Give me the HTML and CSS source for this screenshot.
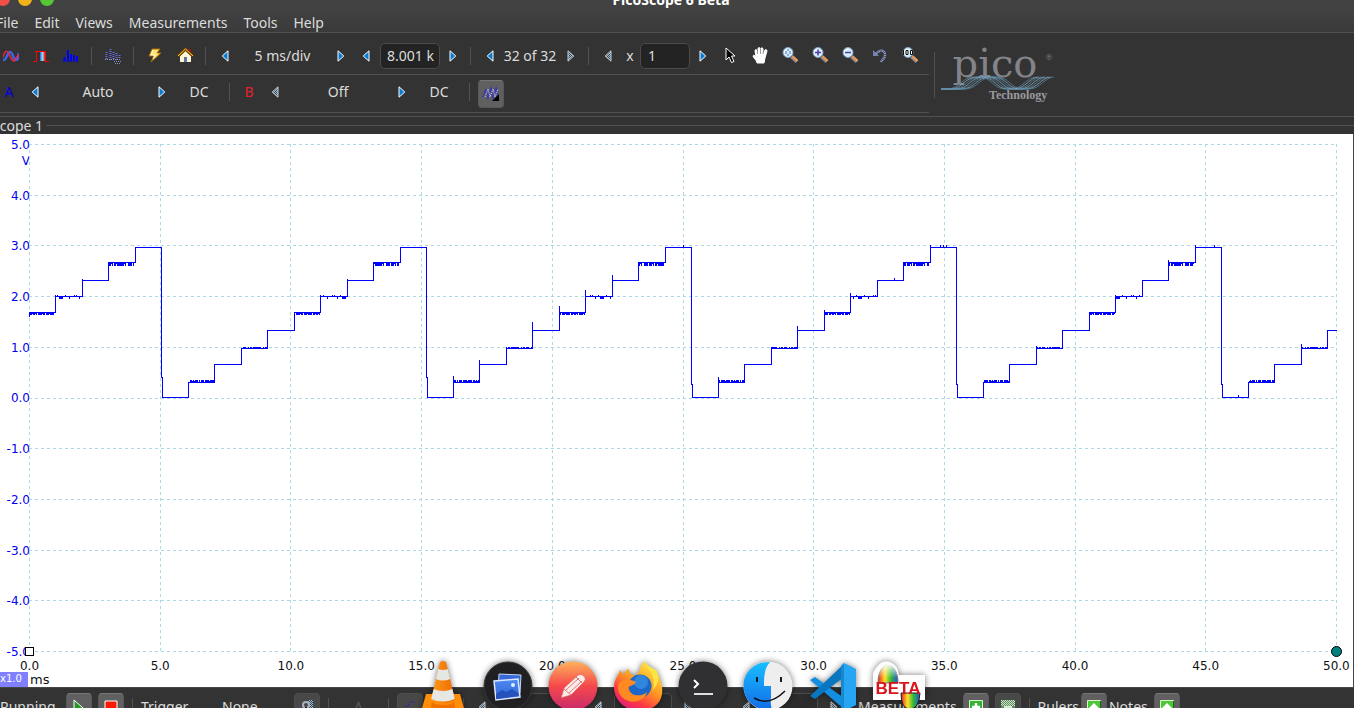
FILE: index.html
```html
<!DOCTYPE html>
<html lang="en">
<head>
<meta charset="utf-8">
<title>PicoScope 6 Beta</title>
<link rel="stylesheet" href="styles.css">
</head>
<body>
<svg class="defs" aria-hidden="true">
  <defs>
    <symbol id="left" viewBox="0 0 8 12"><path d="M7 .8v10.4L1.200 6z" fill="#0a7bd0" stroke="#fff"/></symbol>
    <symbol id="right" viewBox="0 0 8 12"><path d="M1 .8v10.4L6.800 6z" fill="#0a7bd0" stroke="#fff"/></symbol>
    <pattern id="dither" width="2" height="2" patternUnits="userSpaceOnUse"><path d="M0 0h2v2H0z" fill="#38404a"/><path d="M0 0h1v1H0zM1 1h1v1H1z" fill="#9cc0d8"/></pattern>
    <symbol id="left-off" viewBox="0 0 8 12"><path d="M7 .8v10.4L1.200 6z" fill="url(#dither)" stroke="#c4cdd4"/></symbol>
    <symbol id="right-off" viewBox="0 0 8 12"><path d="M1 .8v10.4L6.800 6z" fill="url(#dither)" stroke="#c4cdd4"/></symbol>
    <symbol id="lens" viewBox="0 0 17 17">
      <path d="M9.500 9.500l5.500 5" stroke="#8b8791" stroke-width="4"/><path d="M10.500 9.500l5 4.500" stroke="#f59a4a" stroke-width="2"/>
      <circle cx="6" cy="5.500" r="5" fill="#d3effb" stroke="#7f9dbd"/><path d="M2.500 5a3.500 3.500 0 0 1 3-3" stroke="#fff" fill="none"/>
    </symbol>
  </defs>
</svg>
<div class="window">
  <header class="titlebar">
    <div class="lights"><button class="light close" aria-label="Close"></button><button class="light shrink" aria-label="Minimise"></button><button class="light grow" aria-label="Maximise"></button></div>
    <h1 class="title">PicoScope 6 Beta</h1>
  </header>
  <nav class="menubar">
    <button>File</button><button>Edit</button><button>Views</button><button>Measurements</button><button>Tools</button><button>Help</button>
  </nav>
  <div class="tools">
    <div class="bars">
      <div class="bar">
        <button class="tool" aria-label="Scope mode"><svg viewBox="0 0 16 14" width="16" height="14"><path d="M0 11C4 12 4 3 7 3s3 8 6 8 2-5 3-7" fill="none" stroke="#3f63e8" stroke-width="2.500"/><path d="M0 8c2-7 4-7 6-3s4 9 6 6 2-5 4-5" fill="none" stroke="#f0283c" stroke-width="1.500"/></svg></button>
        <button class="tool" aria-label="Persistence mode"><svg viewBox="0 0 16 12" width="16" height="12"><defs><linearGradient id="band"><stop stop-color="#176bd0"/><stop offset=".5" stop-color="#8edcf5"/><stop offset="1" stop-color="#e02020"/></linearGradient></defs><path d="M7 2h5v9H7z" fill="url(#band)"/><path d="M0 11.500h3.500V1.500h9v10H16M2 1.500h2" fill="none" stroke="#f00"/></svg></button>
        <button class="tool" aria-label="Spectrum mode"><svg viewBox="0 0 16 12" width="16" height="12"><path d="M1.500 7v4M5 0v11M8 4v7M11 5v6M14 6v5" stroke="#0000ff" stroke-width="2"/><path d="M0 11.500h16" stroke="#0000f0" stroke-dasharray="1"/></svg></button>
        <span class="sep"></span>
        <button class="tool" aria-label="Spectrum options" disabled><svg viewBox="0 0 16 16" width="16" height="16"><path d="M1.500 4v8M5.500 1v11M8.500 4v8M11.500 5v7M14.500 7v4" stroke="#6a6cdc" stroke-width="2" stroke-dasharray="1"/><path d="M0 11.500h16M9 13.500h7M10 15.500h6" stroke="#8e90b8" stroke-dasharray="1"/></svg></button>
        <span class="sep"></span>
        <button class="tool" aria-label="Auto setup"><svg viewBox="0 0 14 15" width="14" height="15"><path d="M4 1h8L9 5h4L3 14l3-6H1z" fill="#ffe36e" stroke="#a86a00"/><path d="M5 2L3 7h4l-2 4" fill="none" stroke="#fffbe0"/></svg></button>
        <button class="tool" aria-label="Home"><svg viewBox="0 0 17 15" width="17" height="15"><path d="M11 1h3v6h-3z" fill="#a30d1a"/><path d="M3 8v6h11V8L8.500 3z" fill="#fff5d5"/><path d="M7 9h3v5H7z" fill="#5777a8"/><path d="M1 8l7.500-7L16 8" fill="none" stroke="#6a4500" stroke-width="3"/><path d="M1 8l7.500-7L16 8" fill="none" stroke="#ffc73c"/></svg></button>
        <span class="sep"></span>
        <button class="step" aria-label="Shorter timebase"><svg><use href="#left"/></svg></button>
        <span class="value timebase">5 ms/div</span>
        <button class="step" aria-label="Longer timebase"><svg><use href="#right"/></svg></button>
        <button class="step" aria-label="Fewer samples"><svg><use href="#left"/></svg></button>
        <input class="field samples" aria-label="Samples" value="8.001 k">
        <button class="step" aria-label="More samples"><svg><use href="#right"/></svg></button>
        <span class="sep"></span>
        <button class="step" aria-label="Previous buffer"><svg><use href="#left"/></svg></button>
        <span class="value buffers">32 of 32</span>
        <button class="step" aria-label="Next buffer" disabled><svg><use href="#right-off"/></svg></button>
        <span class="sep"></span>
        <button class="step" aria-label="Zoom factor down" disabled><svg><use href="#left-off"/></svg></button>
        <label class="times" for="factor">x</label>
        <input class="field factor" id="factor" value="1">
        <button class="step" aria-label="Zoom factor up"><svg><use href="#right"/></svg></button>
        <button class="tool" aria-label="Select"><svg viewBox="0 0 11 17" width="11" height="17"><path d="M1 1v12l3-3 2.500 5.500 2.500-1L6.500 9H10z" fill="#000" stroke="#fff"/></svg></button>
        <button class="tool" aria-label="Pan"><svg viewBox="0 0 17 17" width="17" height="17"><path d="M5 16c0-3-4-5-4-7 0-1 2-1 3 1L3 4c0-2 2-2 2 0l1 3V2c0-2 2-2 2 0v5l1-5c0-2 2-1 2 0v5l2-4c1-1 2 0 2 1l-2 7-1 5z" fill="#fff" stroke="#fff"/><path d="M5.500 3v4M8.500 2v5M11.500 4l-.5 3" stroke="#444" stroke-width=".5"/></svg></button>
        <button class="tool" aria-label="Zoom area"><svg viewBox="0 0 17 17" width="17" height="17"><use href="#lens"/><path d="M4 4v3M8 4v3M5 3h2M5 8h2" stroke="#5b62b4" fill="none"/></svg></button>
        <button class="tool" aria-label="Zoom in"><svg viewBox="0 0 17 17" width="17" height="17"><use href="#lens"/><path d="M3 5.500h6M6 2.500v6" stroke="#5535a8" stroke-width="1.500"/></svg></button>
        <button class="tool" aria-label="Zoom out"><svg viewBox="0 0 17 17" width="17" height="17"><use href="#lens"/><path d="M3 5.500h6" stroke="#5535a8" stroke-width="1.500"/></svg></button>
        <button class="tool" aria-label="Undo zoom" disabled><svg viewBox="0 0 16 16" width="16" height="16"><path d="M4 6c4-5 9-4 9 1 0 3-3 5-4 7" fill="none" stroke="#8b9bd0" stroke-width="2.500" stroke-dasharray="1.200 .6"/><path d="M1 2v6h6z" fill="#8b9bd0" opacity=".75"/></svg></button>
        <button class="tool" aria-label="Zoom to full"><svg viewBox="0 0 17 17" width="17" height="17"><use href="#lens"/><path d="M1.500 3v5M4 3.500h2v4H4zM8.500 3.500h2v4h-2z" fill="#fff" stroke="#111"/></svg></button>
      </div>
      <div class="bar channels">
        <button class="channel a">A</button>
        <button class="step" aria-label="Channel A range down"><svg><use href="#left"/></svg></button>
        <span class="value range">Auto</span>
        <button class="step" aria-label="Channel A range up"><svg><use href="#right"/></svg></button>
        <button class="coupling">DC</button>
        <span class="sep"></span>
        <button class="channel b">B</button>
        <button class="step" aria-label="Channel B range down"><svg><use href="#left-off"/></svg></button>
        <span class="value range">Off</span>
        <button class="step" aria-label="Channel B range up"><svg><use href="#right"/></svg></button>
        <button class="coupling">DC</button>
        <span class="sep"></span>
        <button class="raised generator" aria-label="Signal generator"><svg viewBox="0 0 18 16" width="18" height="16"><path d="M1 11l3-8 2 8 3-8 2 8 3-8 2 8" fill="none" stroke="#3a36b8" stroke-width="2" stroke-dasharray="1.500 .7"/><path d="M3 11l3-8 2 8 3-8 2 8 3-8" fill="none" stroke="#d9dcf5" stroke-dasharray="1"/><path d="M17 8v7h-7z" fill="#000"/></svg></button>
      </div>
    </div>
    <div class="brand">
      <svg viewBox="0 0 120 60" width="120" height="60" role="img" aria-label="pico Technology">
        <text class="brand-name" x="60" y="32" text-anchor="middle">pico</text>
        <text class="brand-mark" x="110" y="15">®</text>
        <g id="weave" fill="none" stroke-width=".8"></g>
        <text class="brand-sub" x="54" y="54">Technology</text>
      </svg>
    </div>
  </div>
  <div class="tab"><h2 class="tab-name">Scope 1</h2><span class="tab-rule"></span></div>
  <main class="scope">
    <div class="volts" id="volts"></div>
    <div class="plot">
      <svg id="plot" class="plot-art" viewBox="0 0 1308 508" preserveAspectRatio="none" role="img" aria-label="Channel A staircase waveform"></svg>
      <span class="handle origin"></span>
      <span class="handle end"></span>
    </div>
    <div class="times-axis" id="times"></div>
    <div class="scale"><span class="badge">x1.0</span><span class="unit">ms</span></div>
  </main>
  <footer class="status">
    <span class="word run">Running</span>
    <button class="raised" aria-label="Start"><svg viewBox="0 0 12 16" width="12" height="16"><path d="M1 1v14l9-6z" fill="#239923" stroke="#fff"/></svg></button>
    <button class="raised" aria-label="Stop"><svg viewBox="0 0 14 14" width="14" height="14"><path d="M1 1h12v12H1z" fill="#ff1800" stroke="#fff"/></svg></button>
    <span class="sep"></span>
    <span class="word trigger">Trigger</span>
    <span class="word mode">None</span>
    <button class="raised off" aria-label="Trigger options" disabled><svg viewBox="0 0 14 16" width="14" height="16"><path d="M8 1h5v9H9z" fill="url(#dither)"/><circle cx="6" cy="6" r="3" fill="none" stroke="#aab0c4" stroke-width="2"/><path d="M6 8v7" stroke="#111" stroke-width="2"/></svg></button>
    <span class="sep"></span>
    <button class="word source" disabled>A</button>
    <span class="sep"></span>
    <button class="raised off edge" aria-label="Rising edge" disabled><svg viewBox="0 0 12 12" width="12" height="12"><path d="M1 5h3l2-4h5" stroke="#2020bb" stroke-dasharray="2 1" fill="none"/></svg></button>
    <span class="sep"></span>
    <button class="step low" aria-label="Threshold down" disabled><svg><use href="#left-off"/></svg></button>
    <input class="field threshold" aria-label="Threshold" disabled>
    <button class="step low" aria-label="Threshold up" disabled><svg><use href="#left-off"/></svg></button>
    <input class="field pretrigger" aria-label="Pre-trigger" disabled>
    <button class="step low" aria-label="Pre-trigger up" disabled><svg><use href="#right-off"/></svg></button>
    <button class="step low delay-down" aria-label="Delay down" disabled><svg><use href="#left-off"/></svg></button>
    <input class="field delay" aria-label="Delay" disabled>
    <button class="step low" aria-label="Delay up" disabled><svg><use href="#right-off"/></svg></button>
    <span class="word measure">Measurements</span>
    <button class="raised" aria-label="Add measurement"><svg viewBox="0 0 14 14" width="14" height="14"><path d="M.5.500h13v13H.5z" fill="#32b332" stroke="#d9f5c8"/><path d="M7 3v8M3 7h8" stroke="#fff" stroke-width="2.500"/></svg></button>
    <button class="raised off" aria-label="Remove measurement" disabled><svg viewBox="0 0 14 14" width="14" height="14"><path d="M0 0h14v14H0z" fill="#5c8f5c"/><path d="M0 .5h14M1 1.500h14M0 2.500h14M1 3.500h14M0 4.500h14M1 5.500h14" stroke="#cce0c8" stroke-dasharray="1"/><path d="M3 7h8" stroke="#dce8d8" stroke-width="2"/></svg></button>
    <span class="sep"></span>
    <span class="word">Rulers</span>
    <button class="raised ruler-toggle" aria-label="Show rulers"><svg viewBox="0 0 14 14" width="14" height="14"><path d="M.5.500h13v13H.5z" fill="#4fc53a" stroke="#d9f5c8"/><path d="M13.500 1v13" stroke="#14681c"/><path d="M7 3l5 5H9v4H5V8H2z" fill="#fff"/></svg></button>
    <span class="word">Notes</span>
    <button class="raised" aria-label="Show notes"><svg viewBox="0 0 14 14" width="14" height="14"><path d="M.5.500h13v13H.5z" fill="#4fc53a" stroke="#d9f5c8"/><path d="M13.500 1v13" stroke="#14681c"/><path d="M7 3l5 5H9v4H5V8H2z" fill="#fff"/></svg></button>
  </footer>
  <nav class="dock" aria-label="Dock">
    <button aria-label="VLC"><svg viewBox="0 0 52 52"><defs><linearGradient id="cone"><stop stop-color="#ff9a1c"/><stop offset="1" stop-color="#ec6a00"/></linearGradient></defs><path d="M9 34h34l5 18H4z" fill="#ff8d08"/><path d="M15 42c4 4 18 4 22 0l2 10H13z" fill="#ef7200"/><path d="M23 2q3-2 6 0l9 38q-12 7-24 0z" fill="url(#cone)"/><path d="M21.300 9q4.700 2 9.400 0l2.400 10q-7 3-14.200 0zM16.600 29q9.400 4 18.800 0l2.400 10q-11.800 5-23.600 0z" fill="#e6e6e3"/></svg></button>
    <button aria-label="Photos"><svg viewBox="0 0 52 52"><defs><linearGradient id="sky" x2="0" y2="1"><stop stop-color="#4d8bf0"/><stop offset="1" stop-color="#2f62d8"/></linearGradient></defs><circle cx="26" cy="26" r="24" fill="#202022" stroke="#39393b"/><path d="M17 14l22 1-1 18-22-1z" fill="#3869d8" stroke="#c6d6f4"/><path d="M12 21l24-2 2 18-24 3z" fill="url(#sky)" stroke="#dce8ff" stroke-width="1.500"/><path d="M14 34l6-4 4 2 6-3 6 4 1 3-23 3z" fill="#2553bb"/><circle cx="31" cy="25" r="2" fill="#dff0ff"/></svg></button>
    <button aria-label="Editor"><svg viewBox="0 0 52 52"><defs><linearGradient id="sunset" x2="0" y2="1"><stop stop-color="#ffb25c"/><stop offset=".5" stop-color="#f5484b"/><stop offset="1" stop-color="#c72a6c"/></linearGradient></defs><circle cx="26" cy="26" r="24.500" fill="url(#sunset)"/><path d="M14 38l3-10 14-13q3-2 6 1t0 6L24 35zM17 29l7 6M29 17l7 7M19 30l13-12M22 33l13-12" fill="#f7ecea" stroke="#e35b55" stroke-width=".8"/></svg></button>
    <button aria-label="Firefox"><svg viewBox="0 0 52 52"><defs><linearGradient id="fox" x1=".8" y1="0" x2=".2" y2="1"><stop stop-color="#fff04a"/><stop offset=".45" stop-color="#ff9620"/><stop offset=".75" stop-color="#ff3648"/><stop offset="1" stop-color="#d61884"/></linearGradient></defs><path d="M8 10l4 5q2-6 5-6 0 5 5 7c3-2 5-3 6-7 1-5 4-7 5-8 0 7 7 8 9 14l2-3c5 7 7 15 6 22-2 13-14 17-24 17S2 42 2 27C2 19 6 17 8 10z" fill="url(#fox)"/><circle cx="28" cy="26" r="11.500" fill="#1c67c8"/><circle cx="29" cy="22" r="7" fill="#2f86dc"/><path d="M7 23c5-4 11-4 17-1-2 4-6 3-8 6 2 9 14 9 19 4-2 9-16 14-25 5-4-4-5-9-3-14z" fill="#ff8a22"/><path d="M33 1c0 8 12 11 8 29 6-6 7-15 3-20-4-2-9-4-11-9z" fill="#ffe544"/></svg></button>
    <button aria-label="Terminal"><svg viewBox="0 0 52 52"><circle cx="26" cy="26" r="24.500" fill="#303032"/><path d="M17 20l4 4-4 4" fill="none" stroke="#fff" stroke-width="2"/><path d="M17 34h19" stroke="#dedede" stroke-width="2"/></svg></button>
    <button aria-label="Files"><svg viewBox="0 0 52 52"><defs><linearGradient id="face" x2="0" y2="1"><stop stop-color="#18bfff"/><stop offset="1" stop-color="#126be8"/></linearGradient></defs><circle cx="26" cy="26" r="24.500" fill="#eeeeef"/><path d="M28 2C13 1 1.500 12 1.500 26S13 51 30 50q-2-6-1-13V26h-7c0-12 1-18 6-24z" fill="url(#face)"/><path d="M15 17v5M39 17v5" stroke="#1a1a1c" stroke-width="2"/><path d="M12 38q15 9 31-7" stroke="#111" stroke-width="1.500" fill="none"/></svg></button>
    <button aria-label="Code"><svg viewBox="0 0 52 52"><path d="M8 17l-5 3 34 29V38z" fill="#138ee0"/><path d="M8 39l-5-3L37 4v13z" fill="#0876c0"/><path d="M37 3l12 6v36l-12 6z" fill="#25a5f2"/><path d="M37 3v48l-3-3V6z" fill="#1689d0"/></svg></button>
    <button aria-label="PicoScope"><svg viewBox="0 0 52 52"><defs><linearGradient id="rainbow"><stop stop-color="#e42222"/><stop offset=".35" stop-color="#ffe325"/><stop offset=".65" stop-color="#2fba36"/><stop offset="1" stop-color="#284de0"/></linearGradient><linearGradient id="shine" x2="0" y2="1"><stop stop-color="#fff"/><stop offset="1" stop-color="#fff" stop-opacity="0"/></linearGradient></defs><path d="M1 13q7-15 17-11 8 3 9 13h26v25H1z" fill="#fdfdfd"/><path d="M6 23c0-24 20-24 20 0z" fill="url(#rainbow)" stroke="#777"/><path d="M6 18c1-20 19-20 20 0z" fill="url(#shine)"/><path d="M29 33h19q-1 16-10 16T29 33z" fill="url(#rainbow)" stroke="#222"/><text class="beta" x="26" y="34" text-anchor="middle">BETA</text></svg></button>
  </nav>
</div>
<script src="chart.js"></script>
</body>
</html>
```

FILE: styles.css
```css
* { box-sizing: border-box; }
body {
  margin: 0;
  height: 100vh;
  overflow: hidden;
  background: #333;
  color: #dcdcdc;
  font-family: "Noto Sans", sans-serif;
  font-size: 14px;
  line-height: 20px;
}
button { padding: 0; border: 0; background: none; color: inherit; font: inherit; }
.defs { position: absolute; width: 0; height: 0; }

/* The window's frame reaches past the left and top screen edges. */
.window { position: relative; display: flex; flex-direction: column; height: 100vh; margin-left: -12px; }

.titlebar { display: grid; grid-template-columns: 1fr auto 1fr; align-content: end; align-items: end; height: 10px; overflow: hidden; background: #424242; }
.lights { display: flex; gap: 8px; padding: 0 0 4px 8px; }
.light { width: 14px; height: 14px; border-radius: 50%; }
.close { background: #ee5048; }
.shrink { background: #f3b11b; }
.grow { background: #55c736; }
.title { margin: 0; font-size: 14px; font-weight: 700; line-height: 20px; color: #fff; }
.menubar { display: flex; align-items: center; height: 23px; padding: 3px 0 0 0; background: linear-gradient(#414141, #3a3a3a); border-bottom: 1px solid #515151; }
.menubar button { padding: 0 8px; }

.tools { display: flex; height: 84px; border-bottom: 1px solid #515151; }
.bars { width: 941px; }
.bar { display: flex; align-items: center; height: 42px; padding: 4px 0 0 8px; border-bottom: 1px solid #515151; }
.channels { height: 38px; padding-top: 0; padding-bottom: 4px; }
.tool { display: flex; align-items: center; justify-content: center; width: 30px; height: 28px; }
.sep { flex: none; width: 1px; height: 18px; margin: 0 6px 0 5px; background: #515151; }
.step { display: flex; flex: none; align-items: center; justify-content: center; width: 25px; height: 24px; }
.step svg { width: 8px; height: 12px; }
.value { text-align: center; white-space: nowrap; }
.timebase { width: 91px; }
.buffers { width: 56px; }
.range { width: 102px; }
.coupling { width: 50px; }
.channel { width: 26px; }
.a { color: #0000e0; }
.b { color: #e0242e; }
.times { width: 20px; text-align: center; }
.field { height: 26px; padding: 0 7px; border: 1px solid #4c4c4c; border-radius: 5px; background: #232323; color: #dcdcdc; font: inherit; }
.samples { width: 60px; margin-left: 2px; padding: 0 0 0 6px; }
.factor { width: 50px; }
.raised { display: flex; flex: none; align-items: center; justify-content: center; width: 26px; height: 28px; border: 1px solid #585858; border-top-color: #777; border-radius: 4px; background: #606060; }
.off { background: #484848; border-color: #4d4d4d; }
.generator { margin: 4px 0 0 2px; }

.brand { display: flex; align-items: center; height: 46px; margin: 19px 0 0 5px; border-left: 1px solid #515151; }
.brand svg { overflow: visible; }
.brand-name { font: 40px "DejaVu Serif", serif; fill: #83838a; }
.brand-mark { font: 8px "DejaVu Serif", serif; fill: #83838a; }
.brand-sub { font: 700 12px "Liberation Serif", serif; fill: #9a9a9e; }

.tab { display: flex; align-items: center; height: 17px; padding-left: 4px; }
.tab-name { margin: 0; font-size: 14px; font-weight: 400; line-height: 17px; }
.tab-rule { flex: 1; height: 1px; margin-left: 3px; background: #515151; }

.scope {
  display: grid;
  flex: 1;
  grid-template: minmax(0, 1fr) 20px 15px / 29px minmax(0, 1fr) 16px;
  margin-left: 12px;
  padding-top: 10px;
  min-height: 0;
  border-right: 1px solid #444;
  background: #fff;
  color: #111;
  font-family: "DejaVu Sans", sans-serif;
  font-size: 12px;
  line-height: 16px;
}
.volts { display: flex; flex-direction: column; justify-content: space-between; margin: -7px -1px -8px 0; color: #0000f0; text-align: right; }
.volts span { height: 16px; }
.plot { position: relative; }
.plot-art { display: block; width: 100%; height: 100%; overflow: visible; }
.plot-art path { fill: none; shape-rendering: crispEdges; vector-effect: non-scaling-stroke; }
.rule { stroke: #add8e6; stroke-dasharray: 3 3; }
.trace { stroke: #00f; }
.handle { position: absolute; border: 1px solid #000; }
.origin { bottom: -4px; left: -4px; width: 9px; height: 9px; background: #fff; }
.end { right: -5px; bottom: -5px; width: 11px; height: 11px; border-radius: 50%; background: #008080; }
.times-axis { display: flex; grid-column: 1 / -1; justify-content: space-between; padding: 6px 0 0 12px; margin-right: -1px; }
.times-axis span { width: 35px; text-align: center; }
.scale { display: flex; grid-column: 1 / -1; gap: 2px; align-items: center; }
.badge { width: 28px; height: 15px; background: #8080ff; color: #fff; font-size: 10px; line-height: 14px; }
.unit { font-size: 13px; line-height: 15px; }

.status { display: flex; gap: 6px; height: 21px; padding: 5px 0 0 12px; overflow: hidden; border-top: 1px solid #454545; }
.status .sep { height: 18px; margin: 5px 2px; }
.word { flex: none; line-height: 28px; height: 28px; }
.run { width: 60px; }
.trigger { width: 75px; }
.mode { width: 66px; }
.source { width: 43px; color: #5c5c5c; }
.edge { margin-right: 32px; }
.low { width: 20px; height: 28px; }
.threshold { width: 84px; }
.pretrigger { width: 58px; }
.delay-down { margin-left: 32px; }
.delay { width: 56px; }
.status .field { background: #2c2c2c; height: 28px; }
.measure { margin-left: 8px; }
.ruler-toggle { margin: 0 -4px; }

.dock { position: absolute; bottom: -4px; left: 50%; display: flex; width: 520px; height: 52px; margin-left: -261px; }
.dock button { width: 65px; filter: drop-shadow(0 0 3px #0008); }
.dock svg { width: 52px; height: 52px; overflow: visible; }
.beta { font: 700 17px "Liberation Sans", sans-serif; fill: #d8141e; }
```

FILE: chart.js
```js
const NS = "http://www.w3.org/2000/svg";
function addPath(parent, d, attributes) {
  const path = document.createElementNS(NS, "path");
  path.setAttribute("d", d);
  for (const [name, value] of Object.entries(attributes)) path.setAttribute(name, value);
  parent.append(path);
}

const plot = document.getElementById("plot");
const volts = document.getElementById("volts");
const times = document.getElementById("times");

// Grid and axis labels
for (let i = 0; i <= 10; i++) {
  const x = Math.round(i * 130.7) + 0.5;
  const y = Math.round(i * 50.7) + 0.5;
  addPath(plot, `M${x} 0V508`, { class: "rule" });
  addPath(plot, `M0 ${y}H1308`, { class: "rule" });
  const volt = document.createElement("span");
  volt.append((5 - i).toFixed(1));
  if (i === 0) volt.append(document.createElement("br"), "V");
  volts.append(volt);
  const time = document.createElement("span");
  time.textContent = (i * 5).toFixed(1);
  times.append(time);
}

// Staircase levels, bottom to top, and where each tread starts within a cycle
const levels = [253.5, 238.5, 220.5, 204.5, 186.5, 168.5, 152.5, 136.5, 118.5, 103.5];
const starts = [1, 27, 53, 80, 106, 133, 159, 186, 212, 239, 265];
const period = 265;

// Height of the overshoot at the start of each tread, per cycle
const overshoot = [
  [0, 0, 0, 0, 0, 0, 2, 2, 0, 0],
  [0, 0, 0, 0, 0, 0, 2, 2, 0, 0],
  [0, 7, 5, 2, 9, 7, 7, 6, 0, 0],
  [0, 6, 0, 2, 5, 3, 4, 0, 0, 3],
  [0, 0, 0, 3, 0, 0, 2, 0, 3, 3],
  [0, 0, 0, 5, 0, 0, 0, 0, 0, 0]
];
// One character per pixel: # is a full tick, - a half tick, ^ a tick the other way
const noise = {
  1: [3, "##-####.##-#-###.#.###.##"],
  3: [2, "#-.#.##-###..#.##.#######"],
  5: [-2, "##-##-#.####-##.###-####."],
  6: [-2, ".^.####..^...#....^.^..#."],
  8: [-3, "##-#.##-#######-#..####.#"]
};

let d = "";
for (let cycle = 0; cycle < 6; cycle++) {
  const origin = 132.5 + (cycle - 1) * period;
  for (let n = 0; n < 10; n++) {
    const from = origin + starts[n];
    const to = Math.min(origin + starts[n + 1], 1307.5);
    if (to <= 0.5 || from > 1307) continue;
    const y = levels[n];
    const top = y - overshoot[cycle][n];
    d += d ? `V${top}V${y}` : `M${from} ${y + 4}V${y}`;
    if (noise[n]) {
      const [size, marks] = noise[n];
      for (let k = 0; k < marks.length && from + k + 1 < to; k++) {
        const mark = marks[(k + cycle * 7) % marks.length];
        if (mark === ".") continue;
        const lift = mark === "#" ? size : mark === "^" ? -size : size / 2;
        d += `H${from + k + 1}V${y - lift}V${y}`;
      }
    }
    d += `H${to}`;
    if (n === 9) d += `V${cycle < 2 ? 233 : 240}h1`;
  }
}
for (const [x, y] of [[654.5, 103.5], [911.5, 103.5], [914.5, 103.5], [917.5, 103.5], [1185.5, 103.5], [865.5, 136.5], [1209.5, 253.5]]) {
  d += `M${x} ${y}v-3`;
}
addPath(plot, d, { class: "trace" });

// Interleaved wave lines of the brand mark
const weave = document.getElementById("weave");
for (let i = 0; i < 7; i++) {
  const s = i * 3;
  addPath(weave, `M6 44H${12 + s}C${25 + s} 44 ${26 + s} 32 ${40 + s} 32H${43 + s}C${57 + s} 32 ${58 + s} 44 ${70 + s} 44H${76 + s}C${87 + s} 44 ${92 + s} 32 ${101 + s} 32`, { stroke: i % 2 ? "#8ba8b8" : "#4f83a3" });
}
```
